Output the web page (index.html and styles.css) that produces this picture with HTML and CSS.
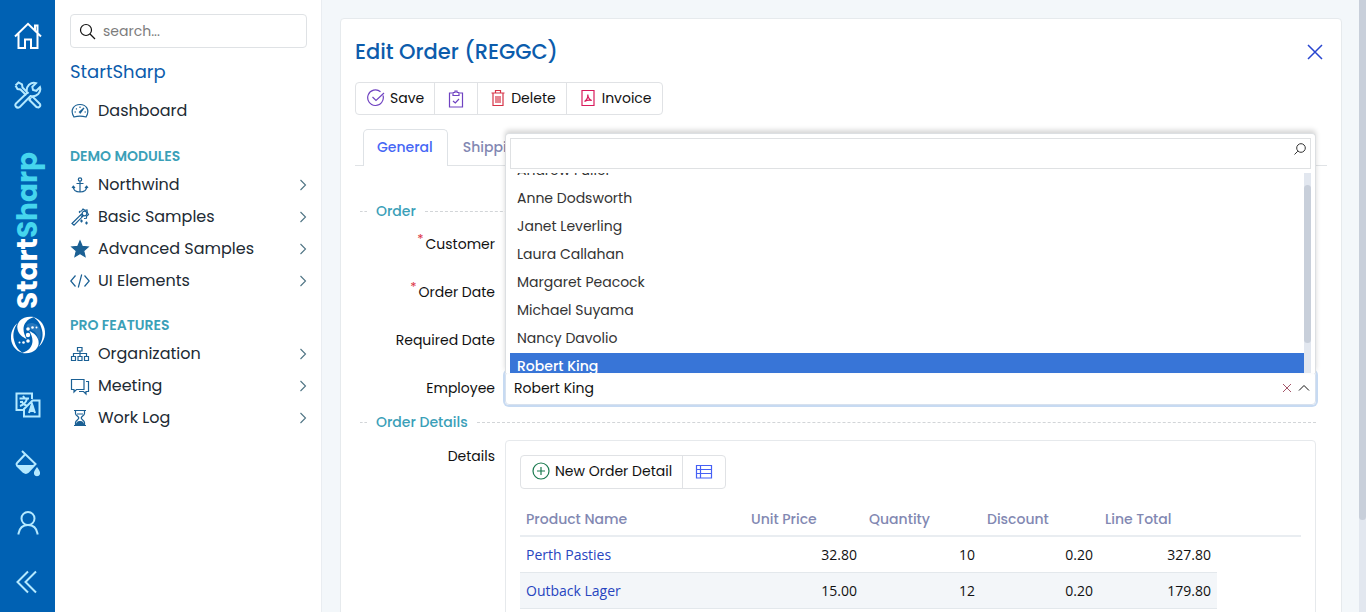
FILE: index.html
```html
<!DOCTYPE html>
<html lang="en">
<head>
<meta charset="utf-8">
<meta name="viewport" content="width=device-width, initial-scale=1">
<title>Edit Order (REGGC)</title>
<link rel="stylesheet" href="styles.css">
</head>
<body>
<div class="app">
  <nav class="rail" aria-label="Main">
    <a class="rail-link home" href="#" aria-label="Home"><svg width="28" height="28" viewBox="0 0 28 28"><path d="M1 14.500 14 1.800 27 14.500M4.500 11.500V26h6.500v-8.500h6V26h6.500V11.500M21 8V3.500h2.500V11"/></svg></a>
    <a class="rail-link" href="#" aria-label="Tools"><svg width="28" height="28" viewBox="0 0 28 28"><path d="M1.500 4.500 4.500 1.500 8 3.500 8.500 6.500 14.500 12.500M1.500 4.500 3.500 8 6.500 8.500 12.300 14.300M17 16.500 18.500 15.500 26 23Q27 25.500 24.500 26.500L22.500 26 15.500 19 16.800 17M2 22.500 13 12Q11.800 7 15 3.800 18.500.800 22 2.200L18.300 5.800 19 9 22.300 9.800 26 6.200Q27.200 10 24.200 13 21 16 16.500 15L5.800 26Q3.500 27.500 1.800 25.500.700 24 2 22.500Z"/></svg></a>
    <a class="brand" href="#"><span class="brand-text">Start<span class="brand-accent">Sharp</span></span>
      <svg class="brand-mark" width="38" height="40" viewBox="0 0 38 40"><path d="M25 2C14 0 7 7 8.500 14c1 5.500 5 8 9 10-1.500-3.500-3-6-3-10C14.500 9 18 4 25 2Z"/><path d="M13 38c11 2 18-5 16.500-12-1-5.500-5-8-9-10 1.500 3.500 3 6 3 10C23.500 31 20 36 13 38Z"/><path d="M17.500 10C21 6 29 8 31 14c1.500 5 .5 9-1.500 13C29 21 27 17 23.500 15.500 20.500 14 18 14 17.500 10Z" opacity=".15"/><path d="M24 2c8 2 12.500 9 12 17-.3 5-3 10-6.500 13C33 27 34.500 21 33 15 31.500 8.500 28.500 4.500 24 2Z"/><path d="M14 38C6 36 1.500 29 2 21c.3-5 3-10 6.500-13C5 13 3.500 19 5 25c1.500 6.500 4.500 10.500 9 13Z"/><circle cx="19" cy="14" r="1.800"/><circle cx="23.500" cy="12.500" r="1.300"/><circle cx="27.500" cy="12.500" r="1"/><circle cx="19" cy="20" r="2.200"/><circle cx="19" cy="26" r="1.800"/><circle cx="14.500" cy="27.500" r="1.300"/><circle cx="10.500" cy="27.500" r="1"/></svg>
    </a>
    <a class="rail-link" href="#" aria-label="Language"><svg width="26" height="26" viewBox="0 0 26 26"><path d="M17 7V1.500H1.500V18H8M17.500 8.500h7V24.500H9V17ZM4.500 6.500h9.500M8 4l2 2.500M5 14c3-1 6-4 7-7M6.500 9c1 3 3 4 5 4.500M5 10h3M14 21l3-9 3 9M15 18.500h4.500"/><path d="m17 13 1.500 6h-3Z" fill="currentColor"/></svg></a>
    <a class="rail-link" href="#" aria-label="Theme"><svg width="28" height="28" viewBox="0 0 28 28"><path d="m8 1 13.500 13-7.500 8q-2 1.700-4.500 0L3 15.500Q2 14 3 13l8-8.500"/><path class="solid" d="M3 15h17l-6 7q-2 1.700-4.500 0ZM23 17c2 3 3.500 4.500 3 7-1 3-5 3-6 0-.5-2.500 1-4 3-7Z"/></svg></a>
    <a class="rail-link" href="#" aria-label="Account"><svg width="26" height="26" viewBox="0 0 26 26"><circle cx="13" cy="8.500" r="6.500"/><path d="M3.500 24.500v-1C4.500 18 8 15 13 15s8.500 3 9.500 8.500v1"/></svg></a>
    <a class="rail-link" href="#" aria-label="Collapse"><svg width="24" height="24" viewBox="0 0 24 24"><path d="M12 1.500 1.500 12 12 22.500M20 1.500 9.500 12 20 22.500"/></svg></a>
  </nav>

  <aside class="sidebar">
    <div class="search">
      <svg width="18" height="18" viewBox="0 0 18 18"><circle cx="7" cy="8" r="5.500"/><path d="m11 12 5 5"/></svg>
      <input type="search" placeholder="search..." aria-label="Search menu">
    </div>
    <a class="site-name" href="#">StartSharp</a>
    <a class="item top" href="#"><svg class="ico" width="20" height="20" viewBox="0 0 20 20"><path d="M4 16C-.5 9 4 3.500 10 3.500S20.500 9 16 16q-6-1.800-12 0ZM9 11.500l5-4.500-4 5.500M4.500 11h1.500M6 7.500l.8.800M10 5.500V7M14.500 11H16"/></svg><span>Dashboard</span></a>

    <h2 class="group">DEMO MODULES</h2>
    <a class="item" href="#"><svg class="ico" width="20" height="20" viewBox="0 0 20 20"><circle cx="10" cy="4.500" r="1.700"/><path d="M10 6.200V17M6.500 8.500h7M3.300 11.500c0 4 3.200 5.500 6.700 5.500s6.700-1.500 6.700-5.500M2 13l1.300-1.800L5 13M15 13l1.700-1.800L18 13"/></svg><span>Northwind</span><svg class="chev" width="8" height="12" viewBox="0 0 8 12"><path d="m1.500 1 5 5-5 5"/></svg></a>
    <a class="item" href="#"><svg class="ico" width="20" height="20" viewBox="0 0 20 20"><path d="M2 16.500 11.500 7l1.800 1.800L4 18.200ZM9 4.500l2.500-.5L13 2l2 1.300 2-.3.300 2.500 1.200 2-1.800 1.500-.3 2.300-2.400.2M10 6l-1-1.500M10.500 8l2 2"/><circle cx="14.500" cy="6.500" r="2.300"/><path d="M11.500 12.500v3M10 14h3M16.500 14.500v3M15 16h3"/></svg><span>Basic Samples</span><svg class="chev" width="8" height="12" viewBox="0 0 8 12"><path d="m1.500 1 5 5-5 5"/></svg></a>
    <a class="item" href="#"><svg class="ico" width="20" height="20" viewBox="0 0 20 20"><path fill="currentColor" d="m10 2 2.300 5.400 5.800.5-4.400 3.900 1.300 5.700L10 14.500l-5 3 1.300-5.700-4.400-3.900 5.800-.5Z"/></svg><span>Advanced Samples</span><svg class="chev" width="8" height="12" viewBox="0 0 8 12"><path d="m1.500 1 5 5-5 5"/></svg></a>
    <a class="item" href="#"><svg class="ico" width="20" height="20" viewBox="0 0 20 20"><path d="M5.500 4.500.8 10l4.700 5.500M14.500 4.500l4.700 5.500-4.700 5.500M11.700 3.500l-3.400 13"/></svg><span>UI Elements</span><svg class="chev" width="8" height="12" viewBox="0 0 8 12"><path d="m1.500 1 5 5-5 5"/></svg></a>

    <h2 class="group">PRO FEATURES</h2>
    <a class="item" href="#"><svg class="ico" width="20" height="20" viewBox="0 0 20 20"><path d="M7.500 3.500h4.500V7H7.500ZM1.500 12.500h4v4h-4ZM8 12.500h4v4H8ZM14.500 12.500h4v4h-4ZM3.500 12.500v-3h13v3M10 7v5.500"/></svg><span>Organization</span><svg class="chev" width="8" height="12" viewBox="0 0 8 12"><path d="m1.500 1 5 5-5 5"/></svg></a>
    <a class="item" href="#"><svg class="ico" width="20" height="20" viewBox="0 0 20 20"><path d="M1.500 3.500H14v10H6.500L4 16v-2.500H1.500ZM16 5.500h2.500v10H16v2.500l-2.500-2.500H9"/></svg><span>Meeting</span><svg class="chev" width="8" height="12" viewBox="0 0 8 12"><path d="m1.500 1 5 5-5 5"/></svg></a>
    <a class="item" href="#"><svg class="ico" width="20" height="20" viewBox="0 0 20 20"><path d="M4 2.500h12M4 17.500h12M5.500 2.500v3c0 2 3.300 3 3.300 4.500s-3.300 2.500-3.300 4.500v3M14.500 2.500v3c0 2-3.300 3-3.300 4.500s3.300 2.500 3.300 4.500v3M7 6h6"/><path fill="currentColor" d="M6.500 17c0-2.500 1.500-3.500 3.500-3.500s3.500 1 3.500 3.500Z"/></svg><span>Work Log</span><svg class="chev" width="8" height="12" viewBox="0 0 8 12"><path d="m1.500 1 5 5-5 5"/></svg></a>
  </aside>

  <main class="content">
    <section class="panel">
      <header class="panel-head">
        <h1>Edit Order (REGGC)</h1>
        <button class="close" type="button" aria-label="Close"><svg width="16" height="16" viewBox="0 0 16 16"><path d="m1 1 14 14M15 1 1 15"/></svg></button>
      </header>

      <div class="toolbar">
        <button type="button" class="t-save"><svg width="18" height="18" viewBox="0 0 18 18"><path d="M16 6.500A7.800 7.800 0 1 1 13.500 2.700M5.500 8l3.500 3.500L17 4"/></svg>Save</button>
        <button type="button" class="t-icon t-save" aria-label="Apply changes"><svg width="18" height="18" viewBox="0 0 18 18"><path d="M5 3H2.500v14h13V3H13M6 5.500V2.500h2V1h2v1.500h2v3ZM6 11l2.300 2L12 9"/></svg></button>
        <button type="button" class="t-delete"><svg width="16" height="18" viewBox="0 0 16 18"><path d="M1.500 4h13M5.500 4V1.500h5V4M3 4v12.500h10V4M6 7v7M8 7v7M10 7v7"/></svg>Delete</button>
        <button type="button" class="t-invoice"><svg width="16" height="18" viewBox="0 0 16 18"><path d="M2 1.500h12v15H2ZM4.500 12.500C7 11 8 9 7.800 5.500 8 8.500 9 10.500 11.800 11.500 9 10.500 7 11 4.500 12.500"/></svg>Invoice</button>
      </div>

      <div class="tabs" role="tablist">
        <button type="button" role="tab" class="tab active" aria-selected="true">General</button>
        <button type="button" role="tab" class="tab" aria-selected="false">Shipping</button>
      </div>

      <form class="form">
        <h3 class="legend">Order</h3>
        <div class="row"><label for="customer"><sup>*</sup>Customer</label><input class="box" id="customer"></div>
        <div class="row"><label for="order-date"><sup>*</sup>Order Date</label><input class="box" id="order-date"></div>
        <div class="row"><label for="required-date">Required Date</label><input class="box" id="required-date"></div>
        <div class="row">
          <label for="employee">Employee</label>
          <div class="select">
            <input id="employee" class="select-value" role="combobox" aria-expanded="true" aria-controls="employees" value="Robert King" readonly>
            <button type="button" class="clear" aria-label="Clear"><svg width="10" height="10" viewBox="0 0 10 10"><path d="m1 1 8 8M9 1 1 9"/></svg></button>
            <button type="button" class="toggle" aria-label="Close list"><svg width="12" height="8" viewBox="0 0 12 8"><path d="m1 6.500 5-5 5 5"/></svg></button>
            <div class="drop">
              <div class="drop-search">
                <input type="text" aria-label="Filter employees">
                <svg width="12" height="12" viewBox="0 0 12 12"><circle cx="7" cy="5" r="4.300"/><path d="M3.800 8.200.5 11.500"/></svg>
              </div>
              <div class="drop-body">
                <ul id="employees" class="options" role="listbox">
                  <li role="option">Andrew Fuller</li>
                  <li role="option">Anne Dodsworth</li>
                  <li role="option">Janet Leverling</li>
                  <li role="option">Laura Callahan</li>
                  <li role="option">Margaret Peacock</li>
                  <li role="option">Michael Suyama</li>
                  <li role="option">Nancy Davolio</li>
                  <li role="option" class="selected" aria-selected="true">Robert King</li>
                </ul>
                <div class="track"><div class="thumb"></div></div>
              </div>
            </div>
          </div>
        </div>

        <h3 class="legend second">Order Details</h3>
        <div class="row details">
          <span class="row-label" id="details-label">Details</span>
          <div class="grid-box">
            <div class="toolbar grid-tools">
              <button type="button" class="t-add"><svg width="18" height="18" viewBox="0 0 18 18"><circle cx="9" cy="9" r="8"/><path d="M9 5v8M5 9h8"/></svg>New Order Detail</button>
              <button type="button" class="t-icon t-cols" aria-label="Columns"><svg width="18" height="16" viewBox="0 0 18 16"><path d="M1.500 1.500h15v12.500h-15ZM1.500 5.500h15M1.500 9.500h15M5.500 1.500V14"/></svg></button>
            </div>
            <table class="grid" aria-labelledby="details-label">
              <colgroup><col class="c-name"><col class="c-num"><col class="c-num"><col class="c-num"><col class="c-num"><col></colgroup>
              <thead><tr><th>Product Name</th><th>Unit Price</th><th>Quantity</th><th>Discount</th><th>Line Total</th><th></th></tr></thead>
              <tbody>
                <tr><td><a href="#">Perth Pasties</a></td><td>32.80</td><td>10</td><td>0.20</td><td>327.80</td></tr>
                <tr><td><a href="#">Outback Lager</a></td><td>15.00</td><td>12</td><td>0.20</td><td>179.80</td></tr>
              </tbody>
            </table>
          </div>
        </div>
      </form>
    </section>
  </main>
  <div class="track page-track"><div class="thumb"></div></div>
</div>
</body>
</html>
```
FILE: styles.css
```css
* { box-sizing: border-box; }

body {
  margin: 0;
  font-family: Poppins, Inter, "Open Sans", sans-serif;
  font-size: 14px;
  line-height: 20px;
  color: #111;
}

a { text-decoration: none; }
button, input { font: inherit; color: inherit; }
button { background: none; border: 0; padding: 0; }
svg { flex: none; fill: none; stroke: currentColor; }
h1, h2, h3 { margin: 0; font-weight: 500; }

.app { display: flex; height: 100vh; overflow: hidden; background: #f3f7fa; }

/* icon rail */
.rail {
  flex: none;
  width: 55px;
  padding-top: 6px;
  display: flex;
  flex-direction: column;
  align-items: center;
  background: #0061b3;
  color: #b4e9ff;
}
.rail-link {
  flex: none;
  height: 59px;
  display: flex;
  align-items: center;
  color: inherit;
  stroke-width: 2;
}
.rail-link.home { color: #fff; }
.rail-link .solid { fill: currentColor; stroke: none; }
.brand {
  flex: none;
  height: 251px;
  padding-top: 28px;
  display: flex;
  flex-direction: column;
  align-items: center;
  gap: 6px;
  color: #fff;
}
.brand-text {
  writing-mode: vertical-rl;
  transform: rotate(180deg);
  font-size: 28px;
  line-height: 36px;
  font-weight: 700;
}
.brand-accent { color: #45d5ee; }
.brand-mark { fill: currentColor; stroke: none; }

/* menu */
.sidebar {
  flex: none;
  width: 267px;
  padding: 14px 14px 14px 15px;
  background: #fff;
  border-right: 1px solid #e9edf1;
}
.search {
  height: 34px;
  display: flex;
  align-items: center;
  gap: 6px;
  padding: 0 8px;
  border: 1px solid #dfe2e5;
  border-radius: 4px;
  stroke-width: 1.200;
}
.search input { flex: 1; min-width: 0; padding: 0; border: 0; outline: 0; background: none; }
.search input::placeholder { color: #7c7c7c; opacity: 1; }
.site-name { display: block; margin: 12px 0 11px; font-size: 18px; line-height: 24px; color: #0c5cac; }
.item { display: flex; align-items: center; height: 32px; gap: 8px; font-size: 16px; line-height: 24px; color: #212a33; }
.item.top { margin-bottom: 19px; }
.item span { flex: 1; }
.ico { color: #1b6094; stroke-width: 1.200; }
.chev { color: #4f7484; stroke-width: 1.100; }
.group { margin: 18px 0 3px; font-size: 14px; line-height: 20px; font-weight: 600; color: #3ba0b8; }
.item.top + .group { margin-top: 0; }

/* panel */
.content { flex: 1; min-width: 0; padding: 18px 17px 0 18px; }
.panel {
  padding: 16px 14px;
  background: #fff;
  border: 1px solid #e6eaed;
  border-radius: 4px;
}
.panel-head { display: flex; justify-content: space-between; align-items: center; height: 34px; }
.panel-head h1 { font-size: 21px; line-height: 32px; font-weight: 500; color: #0c5cac; }
.close { width: 24px; height: 24px; display: grid; place-items: center; color: #2745cf; stroke-width: 1.500; }

.toolbar {
  display: inline-flex;
  margin-top: 13px;
  height: 33px;
  border: 1px solid #e0e2e5;
  border-radius: 4px;
  vertical-align: top;
}
.toolbar button { display: flex; align-items: center; gap: 5px; padding: 0 10px 2px 11px; white-space: nowrap; }
.toolbar button + button { border-left: 1px solid #e0e2e5; }
.toolbar .t-icon { padding: 0 12px; }
.toolbar svg { stroke-width: 1.200; }
.t-save svg { color: #6f42c1; }
.t-delete svg { color: #d63347; }
.t-invoice svg { color: #d91b5c; }
.t-add svg { color: #1b7a50; }
.t-cols svg { color: #4560f5; }
.toolbar .t-delete { padding-left: 12px; }
.toolbar .t-invoice { padding-left: 13px; gap: 6px; }

.tabs { display: flex; margin: 14px 0 35px; padding-left: 8px; border-bottom: 1px solid #e0e3e6; }
.tab { height: 36px; padding: 0 15px; font-weight: 500; color: #8288b2; }
.tab.active {
  height: 37px;
  margin-bottom: -1px;
  padding: 0 14px 2px 13px;
  color: #4667f5;
  background: #fff;
  border: 1px solid #dee2e6;
  border-bottom: 0;
  border-radius: 5px 5px 0 0;
}

/* form */
.form { padding: 0 11px 0 5px; }
.legend {
  display: flex;
  align-items: center;
  gap: 9px;
  font-size: 14px;
  line-height: 20px;
  color: #3ba0b8;
}
.legend::before, .legend::after { content: ""; border-top: 1px dashed #d2d5d8; }
.legend::before { width: 7px; }
.legend::after { flex: 1; }
.row { display: flex; gap: 10px; margin-top: 14px; }
.legend + .row { margin-top: 6px; }
.row label, .row-label { flex: none; width: 135px; padding-top: 7px; text-align: right; }
.row sup { margin-right: 2px; font-size: 13px; line-height: 0; vertical-align: 6px; color: #dc3545; }
.box { flex: 1; min-width: 0; height: 34px; border: 1px solid #dfe2e5; border-radius: 4px; }

.select {
  position: relative;
  flex: 1;
  min-width: 0;
  height: 34px;
  display: flex;
  align-items: center;
  gap: 6px;
  padding: 0 5px 0 8px;
  border: 1px solid #d7e1ee;
  border-radius: 4px;
  box-shadow: 0 0 0 2px #c7daf2;
}
.select-value { flex: 1; min-width: 0; padding: 0; border: 0; outline: 0; background: none; }
.select button { display: grid; place-items: center; }
.clear { color: #a5576a; }
.drop {
  position: absolute;
  left: -1px;
  right: -1px;
  bottom: 31px;
  padding: 4px 4px 0;
  background: #fff;
  border: 1px solid #dcdfe2;
  border-bottom: 0;
  border-radius: 4px 4px 0 0;
  box-shadow: 0 -3px 5px rgba(0, 0, 0, .16);
}
.drop-search { display: flex; height: 31px; padding: 4px; border: 1px solid #dfe1e3; color: #333; }
.drop-search input { flex: 1; min-width: 0; padding: 0 4px; border: 0; outline: 0; }
.drop-body { display: flex; height: 200px; margin-top: 4px; overflow: hidden; }
.options { flex: 1; margin: -16px 0 0; padding: 0; list-style: none; color: #333; }
.options li { height: 28px; padding: 2px 7px; line-height: 22px; }
.options .selected { background: #3875d7; color: #fff; font-weight: 500; }
.track { flex: none; width: 7px; background: #e2e7ef; }
.thumb { background: #c8cfda; border-radius: 4px; }
.drop .thumb { height: 79%; margin-top: 12px; }
.page-track .thumb { height: 85%; border-radius: 0 0 4px 4px; }

.legend.second { margin-top: 7px; }
.legend.second + .row { margin-top: 8px; }
.row-label { padding-top: 6px; }
.grid-box { flex: 1; min-width: 0; padding: 14px 14px 48px; border: 1px solid #e6e9ec; border-radius: 4px; }
.grid-tools { margin-top: 0; height: 34px; }
.grid { width: 100%; margin-top: 12px; border-collapse: separate; border-spacing: 0; table-layout: fixed; }
.c-name { width: 225px; }
.c-num { width: 118px; }
.grid th { height: 36px; padding: 2px 6px 0; text-align: left; font-weight: 500; color: #8288b2; border-bottom: 2px solid #e9edf1; }
.grid td { height: 36px; padding: 0 6px; text-align: right; font-family: "Open Sans", sans-serif; border-bottom: 1px solid #e3e8ec; }
.grid td:first-child { text-align: left; }
.grid tbody tr:nth-child(even) td { background: #f3f6f9; }
.grid a { color: #2745bf; }
```
